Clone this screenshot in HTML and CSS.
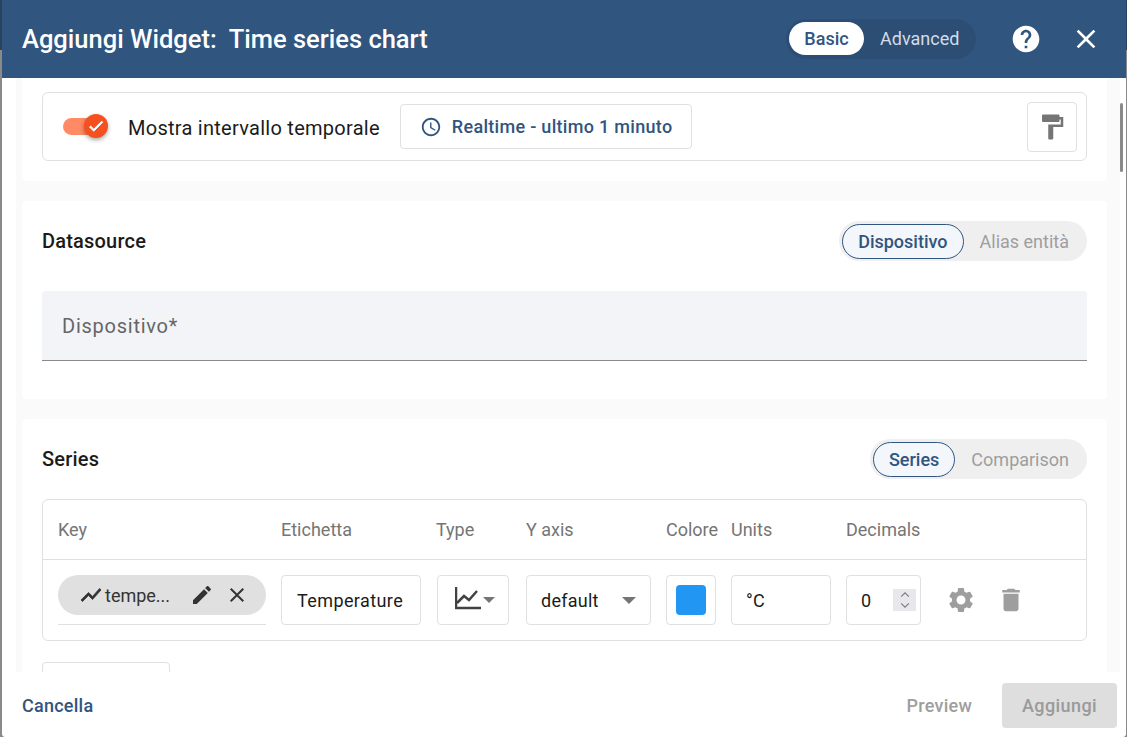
FILE: index.html
```html
<!DOCTYPE html>
<html lang="en">
<head>
  <meta charset="UTF-8">
  <meta name="viewport" content="width=device-width, initial-scale=1.0">
  <title>Aggiungi Widget</title>
  <link rel="stylesheet" href="styles.css">
</head>
<body>
  <div class="dialog">
    <!-- Header -->
    <header class="dialog-header">
      <h1>Aggiungi Widget:&nbsp; Time series chart</h1>
      <div class="mode-toggle">
        <span class="mode on">Basic</span>
        <span class="mode">Advanced</span>
      </div>
      <svg class="help-icon" viewBox="0 0 24 24"><path d="M12 2C6.48 2 2 6.48 2 12s4.48 10 10 10 10-4.48 10-10S17.52 2 12 2zm1 17h-2v-2h2v2zm2.07-7.75l-.9.92C13.45 12.9 13 13.5 13 15h-2v-.5c0-1.1.45-2.1 1.17-2.83l1.24-1.26c.37-.36.59-.86.59-1.41 0-1.1-.9-2-2-2s-2 .9-2 2H8c0-2.21 1.79-4 4-4s4 1.79 4 4c0 .88-.36 1.68-.93 2.25z"/></svg>
      <svg class="close-icon" viewBox="0 0 24 24"><path d="M19 6.41L17.59 5 12 10.59 6.41 5 5 6.41 10.59 12 5 17.59 6.41 19 12 13.41 17.59 19 19 17.59 13.41 12z"/></svg>
    </header>

    <main class="dialog-body">
      <div class="scroll-area">
        <!-- Timewindow card -->
        <section class="card card-top">
          <div class="time-box">
            <span class="switch">
              <span class="switch-thumb">
                <svg viewBox="0 0 24 24"><path d="M9 16.17L4.83 12l-1.42 1.41L9 19 21 7l-1.41-1.41z"/></svg>
              </span>
            </span>
            <span class="time-label">Mostra intervallo temporale</span>
            <button class="time-btn">
              <svg viewBox="0 0 24 24"><path d="M11.99 2C6.47 2 2 6.48 2 12s4.47 10 9.99 10C17.52 22 22 17.52 22 12S17.52 2 11.99 2zM12 20c-4.42 0-8-3.58-8-8s3.58-8 8-8 8 3.58 8 8-3.58 8-8 8zm.5-13H11v6l5.25 3.15.75-1.23-4.5-2.67z"/></svg>
              Realtime - ultimo 1 minuto
            </button>
            <button class="paint-btn">
              <svg viewBox="0 0 24 24"><path d="M18 4V3c0-.55-.45-1-1-1H5c-.55 0-1 .45-1 1v4c0 .55.45 1 1 1h12c.55 0 1-.45 1-1V6h1v4H9v11c0 .55.45 1 1 1h2c.55 0 1-.45 1-1v-9h8V4h-3z"/></svg>
            </button>
          </div>
        </section>

        <!-- Datasource card -->
        <section class="card card-source">
          <div class="card-head">
            <h2>Datasource</h2>
            <div class="seg">
              <span class="seg-item on">Dispositivo</span>
              <span class="seg-item">Alias entità</span>
            </div>
          </div>
          <div class="source-field">Dispositivo*</div>
        </section>

        <!-- Series card -->
        <section class="card">
          <div class="card-head">
            <h2>Series</h2>
            <div class="seg">
              <span class="seg-item on">Series</span>
              <span class="seg-item">Comparison</span>
            </div>
          </div>
          <div class="series-table">
            <div class="series-row series-labels">
              <span>Key</span>
              <span>Etichetta</span>
              <span class="label-type">Type</span>
              <span>Y axis</span>
              <span>Colore</span>
              <span>Units</span>
              <span>Decimals</span>
            </div>
            <div class="series-row series-values">
              <div class="key-cell">
                <div class="key-chip">
                  <svg class="chip-chart" viewBox="0 0 24 24"><path d="M3.5 18.49l6-6.01 4 4L22 6.92l-1.41-1.41-7.09 7.97-4-4L2 16.99z"/></svg>
                  <span class="chip-text">tempe...</span>
                  <svg class="chip-edit" viewBox="0 0 24 24"><path d="M3 17.25V21h3.75L17.81 9.94l-3.75-3.75L3 17.25zM20.71 7.04c.39-.39.39-1.02 0-1.41l-2.34-2.34c-.39-.39-1.02-.39-1.41 0l-1.83 1.83 3.75 3.75 1.83-1.83z"/></svg>
                  <svg class="chip-close" viewBox="0 0 24 24"><path d="M19 6.41L17.59 5 12 10.59 6.41 5 5 6.41 10.59 12 5 17.59 6.41 19 12 13.41 17.59 19 19 17.59 13.41 12z"/></svg>
                </div>
              </div>
              <div class="ctl ctl-label">Temperature</div>
              <div class="ctl ctl-type">
                <svg class="type-icon" viewBox="0 0 26 24"><path d="M1 1v21h25" /><path d="M2 17l7-7 5 4 8-9" /></svg>
                <span class="caret caret-small"></span>
              </div>
              <div class="ctl ctl-axis">default<span class="caret"></span></div>
              <div class="ctl ctl-color"><span class="swatch"></span></div>
              <div class="ctl">°C</div>
              <div class="ctl ctl-decimals">0
                <span class="spinner">
                  <svg viewBox="0 0 10 20"><path d="M1.5 7L5 3.5 8.5 7M1.5 13L5 16.5 8.5 13"/></svg>
                </span>
              </div>
              <div class="row-actions">
                <svg viewBox="0 0 24 24"><path d="M19.14,12.94c.04-.3.06-.61.06-.94 0-.32-.02-.64-.07-.94l2.03-1.58c.18-.14.23-.41.12-.61l-1.92-3.32c-.12-.22-.37-.29-.59-.22l-2.39.96c-.5-.38-1.03-.7-1.62-.94L14.4,2.81c-.04-.24-.24-.41-.48-.41h-3.84c-.24,0-.43.17-.47.41L9.25,5.35C8.66,5.59,8.12,5.92,7.63,6.29L5.24,5.33c-.22-.08-.47,0-.59.22L2.74,8.87C2.62,9.08,2.66,9.34,2.86,9.48l2.03,1.58C4.84,11.36,4.8,11.69,4.8,12s.02.64.07.94l-2.03,1.58c-.18.14-.23.41-.12.61l1.92,3.32c.12.22.37.29.59.22l2.39-.96c.5.38,1.03.7,1.62.94l.36,2.54c.05.24.24.41.48.41h3.84c.24,0,.44-.17.47-.41l.36-2.54c.59-.24,1.13-.56,1.62-.94l2.39.96c.22.08.47,0,.59-.22l1.92-3.32c.12-.22.07-.47-.12-.61L19.14,12.94zM12,15.6c-1.98,0-3.6-1.62-3.6-3.6s1.62-3.6,3.6-3.6 3.6,1.62,3.6,3.6S13.98,15.6,12,15.6z"/></svg>
                <svg viewBox="0 0 24 24"><path d="M6 19c0 1.1.9 2 2 2h8c1.1 0 2-.9 2-2V7H6v12zM19 4h-3.5l-1-1h-5l-1 1H5v2h14V4z"/></svg>
              </div>
            </div>
          </div>
          <div class="add-series"></div>
        </section>
      </div>

      <div class="scroll-thumb"></div>
    </main>

    <!-- Footer -->
    <footer class="dialog-footer">
      <span class="cancel">Cancella</span>
      <span class="preview">Preview</span>
      <button class="add-btn">Aggiungi</button>
    </footer>
  </div>
</body>
</html>
```

FILE: styles.css
```css
/* Reset some default styling */
* {
  margin: 0;
  padding: 0;
  box-sizing: border-box;
}

/* Page behind the dialog */
body {
  font-family: 'Roboto', 'Liberation Sans', sans-serif;
  background: linear-gradient(#28425f 0, #28425f 50px, #8a8a8a 50px);
  color: #1b1b1b;
  height: 737px;
  overflow: hidden;
}

.dialog {
  display: flex;
  flex-direction: column;
  width: 1124px;
  height: 737px;
  margin-left: 2px;
  background-color: white;
  border-radius: 0 0 4px 4px;
  overflow: hidden;
}

/* Header */
.dialog-header {
  display: flex;
  align-items: center;
  flex: none;
  height: 78px;
  padding: 0 0 1px 20px;
  background-color: #30557f;
  color: white;
}

.dialog-header h1 {
  flex: 1;
  font-size: 25.5px;
  font-weight: 500;
}

.mode-toggle {
  display: flex;
  align-items: center;
  width: 190px;
  height: 40px;
  padding: 0 3px;
  margin-right: 34px;
  border-radius: 20px;
  background-color: rgba(0, 0, 0, 0.08);
}

.mode {
  flex: none;
  font-size: 18px;
  line-height: 33px;
  padding: 0 16px;
  color: #d5dce5;
}

.mode.on {
  width: 75px;
  padding: 0;
  text-align: center;
  background-color: white;
  border-radius: 17px;
  color: #30557f;
  font-weight: 500;
}

.help-icon {
  width: 32px;
  height: 32px;
  fill: white;
  margin-right: 28px;
}

.close-icon {
  width: 32px;
  height: 32px;
  fill: white;
  margin-right: 24px;
}

/* Body */
.dialog-body {
  position: relative;
  flex: 1;
  min-height: 0;
  padding: 0 6px 0 14px;
}

.scroll-area {
  height: 100%;
  overflow: hidden;
  padding: 0 13px 0 6px;
  background-color: #fafafa;
}

.card {
  padding: 20px;
  margin-bottom: 20px;
  background-color: white;
  border-radius: 4px;
}

.card-top {
  padding-top: 14px;
  border-radius: 0 0 4px 4px;
}

.card-source {
  padding-bottom: 38px;
}

.card-head {
  display: flex;
  align-items: center;
  justify-content: space-between;
  height: 40px;
}

.card-head h2 {
  font-size: 20px;
  font-weight: 500;
  letter-spacing: 0.2px;
}

/* Timewindow row */
.time-box {
  display: flex;
  align-items: center;
  height: 69px;
  padding: 0 9px 0 20px;
  border: 1px solid #e0e0e0;
  border-radius: 6px;
}

.switch {
  position: relative;
  width: 34px;
  height: 17px;
  margin-right: 31px;
  border-radius: 9px;
  background-color: #ff8a65;
}

.switch-thumb {
  position: absolute;
  top: -4px;
  right: -11px;
  width: 24px;
  height: 24px;
  border-radius: 50%;
  background-color: #f4511e;
  box-shadow: 0 2px 4px rgba(0, 0, 0, 0.35);
}

.switch-thumb svg {
  display: block;
  width: 18px;
  height: 18px;
  margin: 3px;
  fill: white;
  stroke: white;
  stroke-width: 1.2;
}

.time-label {
  font-size: 20px;
  letter-spacing: 0.27px;
  margin-right: 20px;
  padding-top: 2px;
}

.time-btn {
  display: flex;
  align-items: center;
  gap: 10px;
  width: 292px;
  height: 45px;
  padding-left: 19px;
  border: 1px solid #e0e0e0;
  border-radius: 4px;
  background-color: white;
  color: #30557f;
  font-family: inherit;
  font-size: 18px;
  font-weight: 500;
  letter-spacing: 0.3px;
}

.time-btn svg {
  width: 22px;
  height: 22px;
  fill: #30557f;
}

.paint-btn {
  display: flex;
  align-items: center;
  justify-content: center;
  width: 50px;
  height: 50px;
  margin-left: auto;
  border: 1px solid #e0e0e0;
  border-radius: 4px;
  background-color: white;
}

.paint-btn svg {
  width: 30px;
  height: 30px;
  fill: #757575;
}

/* Segmented toggles */
.seg {
  display: flex;
  align-items: center;
  height: 40px;
  padding: 0 3px;
  border-radius: 20px;
  background-color: #efefef;
}

.seg-item {
  font-size: 18px;
  line-height: 33px;
  padding: 0 14px 0 15px;
  border: 1px solid transparent;
  color: #9e9e9e;
}

.seg-item.on {
  padding: 0 15px;
  border-color: #30557f;
  border-radius: 18px;
  background-color: #f3f6fb;
  color: #30557f;
  font-weight: 500;
}

/* Datasource field */
.source-field {
  height: 70px;
  margin-top: 30px;
  padding: 0 20px;
  line-height: 70px;
  font-size: 20px;
  letter-spacing: 0.75px;
  color: #666;
  background-color: #f3f4f8;
  border-bottom: 1px solid #8a8a8a;
  border-radius: 4px 4px 0 0;
}

/* Series table */
.series-table {
  margin-top: 20px;
  border: 1px solid #e0e0e0;
  border-radius: 6px;
}

.series-row {
  display: grid;
  grid-template-columns: 208px 141px 74px 125px 50px 100px 75px 1fr;
  column-gap: 15px;
  padding: 0 15px;
}

.series-labels {
  height: 60px;
  padding-bottom: 1px;
  align-items: center;
  border-bottom: 1px solid #e0e0e0;
  font-size: 18px;
  color: #757575;
}

.label-type {
  margin-left: -1px;
}

.series-values {
  height: 80px;
  padding-top: 15px;
}

.key-cell {
  height: 50px;
  border-bottom: 1px solid #e0e0e0;
}

.key-chip {
  display: flex;
  align-items: center;
  height: 40px;
  padding-left: 21px;
  border-radius: 20px;
  background-color: #e0e0e0;
  font-size: 18px;
  color: #333;
}

.chip-chart,
.chip-edit,
.chip-close {
  width: 24px;
  height: 24px;
  fill: #333;
  flex: none;
}

.chip-chart {
  stroke: #333;
  stroke-width: 0.8;
}

.chip-text {
  margin-left: 2px;
  width: 85px;
}

.chip-close {
  margin-left: 11px;
}

.ctl {
  display: flex;
  align-items: center;
  height: 50px;
  padding-left: 14px;
  border: 1px solid #e0e0e0;
  border-radius: 4px;
  font-size: 18px;
  letter-spacing: 0.25px;
}

.ctl-label {
  width: 140px;
  padding-left: 15px;
  letter-spacing: 0.4px;
}

.ctl-type {
  width: 72px;
  padding-left: 17px;
}

.type-icon {
  width: 26px;
  height: 24px;
  margin-top: -4px;
  fill: none;
  stroke: #424242;
  stroke-width: 2.5;
}

.caret {
  margin-left: auto;
  margin-right: 14px;
  border-left: 7px solid transparent;
  border-right: 7px solid transparent;
  border-top: 7px solid #757575;
}

.caret-small {
  margin-left: 2px;
  margin-right: 0;
  border-left-width: 6px;
  border-right-width: 6px;
  border-top-width: 6px;
}

.ctl-color {
  padding-left: 9px;
}

.swatch {
  width: 30px;
  height: 30px;
  border-radius: 4px;
  background-color: #2196f3;
}

.ctl-decimals {
  justify-content: space-between;
  padding-right: 4px;
}

.spinner {
  width: 23px;
  height: 22px;
  background-color: #e8e8ec;
}

.spinner svg {
  display: block;
  width: 12px;
  height: 22px;
  margin: 0 auto;
  fill: none;
  stroke: #7a7a7a;
  stroke-width: 1;
}

.row-actions {
  display: flex;
  align-items: center;
  gap: 20px;
  height: 50px;
  padding-left: 10px;
}

.row-actions svg {
  width: 30px;
  height: 30px;
  fill: #9e9e9e;
}

.add-series {
  width: 128px;
  height: 45px;
  margin-top: 21px;
  border: 1px solid #e0e0e0;
  border-radius: 4px;
}

.scroll-thumb {
  position: absolute;
  top: 25px;
  right: 3px;
  width: 3px;
  height: 69px;
  border-radius: 2px;
  background-color: #8a8a8a;
}

/* Footer */
.dialog-footer {
  display: flex;
  align-items: center;
  flex: none;
  height: 65px;
  padding: 11px 9px 9px 20px;
  background-color: white;
  font-size: 18px;
  font-weight: 500;
  letter-spacing: 0.25px;
}

.cancel {
  flex: 1;
  color: #30557f;
}

.preview {
  margin-right: 30px;
  color: #9e9e9e;
}

.add-btn {
  width: 115px;
  height: 45px;
  border: none;
  border-radius: 4px;
  background-color: #dedede;
  color: #9a9a9a;
  font-family: inherit;
  font-size: 18px;
  font-weight: 500;
  letter-spacing: 0.4px;
}
```
